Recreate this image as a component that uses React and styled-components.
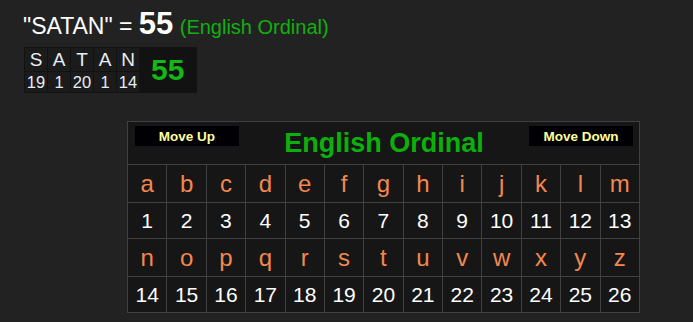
import styled, { createGlobalStyle } from "styled-components";

const GlobalStyle = createGlobalStyle`
  body {
    margin: 0;
    background: #222222;
    font-family: "Liberation Sans", Arial, sans-serif;
  }
`;

const WORD = "SATAN";
const value = (ch) => ch.toLowerCase().charCodeAt(0) - 96;
const ALPHABET = "abcdefghijklmnopqrstuvwxyz".split("");

const Page = styled.div`
  padding: 10px 0 0 23px;
  display: flex;
  flex-direction: column;
`;

const Heading = styled.div`
  color: #ffffff;
  font-size: 23px;
  line-height: 28px;
  height: 28px;
  white-space: nowrap;
`;

const Total = styled.b`
  font-size: 31px;
`;

const Cipher = styled.span`
  color: #10b010;
  font-size: 20px;
`;

const Breakdown = styled.table`
  margin-top: 9px;
  margin-left: 1px;
  background: #121212;
  border-spacing: 1px;
  align-self: flex-start;
`;

const Cell = styled.td`
  background: #1b1b1b;
  color: #e6eef6;
  text-align: center;
  padding: 0;
  width: 22px;
  font-size: ${(p) => (p.$top ? "19px" : "16.5px")};
  height: ${(p) => (p.$top ? "23px" : "20px")};
`;

const Sum = styled.td`
  color: #14b814;
  font-weight: bold;
  font-size: 30px;
  padding: 0 12px 0 11px;
`;

const Chart = styled.table`
  margin: 28px 0 0 104px;
  width: 513px;
  table-layout: fixed;
  border-collapse: collapse;
  border: 1px solid #404040;
  background: #161616;
`;

const HeadCell = styled.td`
  height: 42px;
  padding: 0;
  vertical-align: top;
`;

const HeadBar = styled.div`
  display: flex;
  align-items: flex-start;
  justify-content: space-between;
  padding: 4px 6px 0 7px;
`;

const MoveButton = styled.div`
  width: 104px;
  height: 20px;
  background: #000005;
  color: #ffff99;
  font-size: 13.5px;
  font-weight: bold;
  display: flex;
  align-items: center;
  justify-content: center;
`;

const Title = styled.div`
  color: #0cb00c;
  font-size: 27px;
  font-weight: bold;
  line-height: 31px;
  margin-top: 2px;
`;

const Box = styled.td`
  padding: 0;
  border: 1px solid #404040;
  text-align: center;
  color: ${(p) => (p.$letter ? "#f2884f" : "#ffffff")};
  font-size: ${(p) => (p.$letter ? "24px" : "21px")};
  height: ${(p) => (p.$letter ? "37px" : "35px")};
`;

const halves = [ALPHABET.slice(0, 13), ALPHABET.slice(13)];

export default function App() {
  const letters = WORD.split("");
  const total = letters.reduce((s, c) => s + value(c), 0);
  return (
    <Page>
      <GlobalStyle />
      <Heading>
        "{WORD}" = <Total>{total}</Total> <Cipher>(English Ordinal)</Cipher>
      </Heading>
      <Breakdown>
        <tbody>
          <tr>
            {letters.map((c, i) => (
              <Cell key={i} $top>
                {c}
              </Cell>
            ))}
            <Sum rowSpan={2}>{total}</Sum>
          </tr>
          <tr>
            {letters.map((c, i) => (
              <Cell key={i}>{value(c)}</Cell>
            ))}
          </tr>
        </tbody>
      </Breakdown>
      <Chart>
        <tbody>
          <tr>
            <HeadCell colSpan={13}>
              <HeadBar>
                <MoveButton>Move Up</MoveButton>
                <Title>English Ordinal</Title>
                <MoveButton>Move Down</MoveButton>
              </HeadBar>
            </HeadCell>
          </tr>
          {halves.map((row, r) => [
            <tr key={`l${r}`}>
              {row.map((c) => (
                <Box key={c} $letter>
                  {c}
                </Box>
              ))}
            </tr>,
            <tr key={`n${r}`}>
              {row.map((c) => (
                <Box key={c}>{value(c)}</Box>
              ))}
            </tr>,
          ])}
        </tbody>
      </Chart>
    </Page>
  );
}
